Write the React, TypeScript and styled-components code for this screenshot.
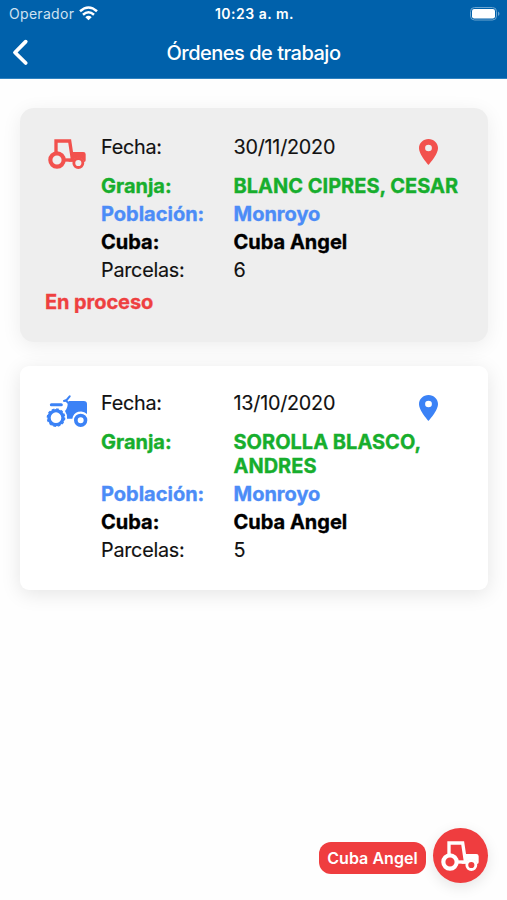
import React from "react";
import styled, { createGlobalStyle } from "styled-components";

const GlobalStyle = createGlobalStyle`
  * { box-sizing: border-box; }
  body {
    margin: 0;
    background: #fefefe;
    font-family: Inter, "Liberation Sans", sans-serif;
    color: #111;
  }
`;

const Screen = styled.div`
  display: flex;
  flex-direction: column;
  height: 900px;
  overflow: hidden;
`;

const Header = styled.header`
  height: 79px;
  background: #0061ab;
  border-bottom: 1px solid #2f82c0;
  color: #fff;
`;

const StatusBar = styled.div`
  display: grid;
  grid-template-columns: 1fr auto 1fr;
  align-items: center;
  height: 27px;
  padding: 0 7px 0 9px;
  font-size: 14px;
`;

const Carrier = styled.div`
  display: flex;
  align-items: center;
  gap: 5px;
  color: #cfe2f1;
  letter-spacing: 0.3px;
`;

const Clock = styled.div`
  font-weight: 600;
  letter-spacing: 0.5px;
`;

const BatterySlot = styled.div`
  display: flex;
  justify-content: flex-end;
`;

const NavBar = styled.div`
  display: grid;
  grid-template-columns: 40px 1fr 40px;
  align-items: center;
  height: 51px;
`;

const BackButton = styled.button`
  display: flex;
  padding: 0 0 0 12px;
  border: 0;
  background: none;
  color: #fff;
`;

const Title = styled.h1`
  margin: 0;
  text-align: center;
  font-size: 20px;
  font-weight: 500;
  letter-spacing: -0.5px;
`;

const OrderList = styled.main`
  display: flex;
  flex-direction: column;
  gap: 24px;
  padding: 29px 19px 0 20px;
`;

const OrderCard = styled.article<{ $active?: boolean }>`
  height: ${(p) => (p.$active ? 234 : 224)}px;
  padding: ${(p) => (p.$active ? 27.7 : 26.4)}px 0 0 25px;
  border-radius: ${(p) => (p.$active ? 14 : 9)}px;
  background: ${(p) => (p.$active ? "#eeeeee" : "#ffffff")};
  box-shadow: 0 4px 20px rgba(0, 0, 0, ${(p) => (p.$active ? 0.07 : 0.1)});
`;

const CardBody = styled.div`
  display: grid;
  grid-template-columns: 56px 1fr;
`;

const VehicleSlot = styled.div<{ $inset: number }>`
  display: flex;
  padding: 3px 0 0 ${(p) => p.$inset}px;
`;

const Fields = styled.div`
  display: flex;
  flex-direction: column;
  gap: 5px;
`;

const FieldRow = styled.div<{ $tone?: string; $first?: boolean }>`
  display: grid;
  grid-template-columns: 132.5px 1fr;
  height: ${(p) => (p.$first ? "34px" : "auto")};
  font-size: ${(p) => (p.$tone ? 20 : 19.8)}px;
  line-height: 23.2px;
  font-weight: ${(p) => (p.$tone ? 700 : 400)};
  letter-spacing: ${(p) => (p.$tone ? 0 : -0.25)}px;
  color: ${(p) => p.$tone || "#111"};
  -webkit-text-stroke: ${(p) => (p.$tone ? 0.35 : 0.15)}px currentColor;
`;

const Value = styled.span``;

const DateValue = styled.div`
  display: grid;
  grid-template-columns: 185px auto;
  justify-content: start;
`;

const PinSlot = styled.span`
  display: flex;
  padding-top: 3px;
`;

const Status = styled.div`
  margin-top: 8px;
  font-size: 20px;
  line-height: 23px;
  font-weight: 700;
  letter-spacing: -0.08px;
  color: #ee4040;
  -webkit-text-stroke: 0.3px currentColor;
`;

const FloatingAction = styled.div`
  position: absolute;
  left: 319px;
  top: 828px;
  display: flex;
  align-items: center;
  gap: 6.5px;
`;

const ActionLabel = styled.span`
  display: flex;
  align-items: center;
  justify-content: center;
  width: 107px;
  height: 32px;
  margin-top: 4px;
  border-radius: 12px;
  background: #ef3d3f;
  color: #fff;
  font-size: 16px;
  font-weight: 600;
  letter-spacing: 0.05px;
`;

const ActionButton = styled.button`
  display: flex;
  align-items: center;
  justify-content: center;
  width: 55px;
  height: 55px;
  padding: 0;
  border: 0;
  border-radius: 50%;
  background: #ef3d3f;
  box-shadow: 0 4px 14px rgba(0, 0, 0, 0.1);
`;

function CabTractor({ color }: { color: string }) {
  return (
    <svg width="38" height="30" viewBox="113 134 114 90" fill="none" stroke={color}>
      <path d="M137 176V140H178L186 193" strokeWidth="10" />
      <path d="M158 197H190" strokeWidth="10" />
      <path
        d="M181 173H219Q226 173 226 180V198Q226 203 221 203A18 18 0 0 0 187 202H174L183 191Z"
        fill={color}
        stroke="none"
      />
      <circle cx="140" cy="197" r="20" strokeWidth="12.5" />
      <circle cx="204" cy="206" r="13.5" strokeWidth="8.5" />
    </svg>
  );
}

function OpenTractor({ color }: { color: string }) {
  return (
    <svg width="42" height="33" viewBox="108 42 126 99" fill="none" stroke={color}>
      <path d="M124 71H154" strokeWidth="9" strokeLinecap="round" />
      <path d="M162 60L170 57L179 46" strokeWidth="6" strokeLinecap="round" strokeLinejoin="round" />
      <path d="M166 58L178 68" strokeWidth="6" />
      <path
        d="M177 60H221Q231 60 231 69V99A26 26 0 0 0 187 113H171A34 34 0 0 0 165 90Q174 80 173 65Z"
        fill={color}
        stroke="none"
      />
      <circle cx="138" cy="110" r="21" strokeWidth="10" />
      <circle cx="138" cy="110" r="26" strokeWidth="4" strokeDasharray="8 5.6" />
      <circle cx="212" cy="118" r="14.5" strokeWidth="11" />
    </svg>
  );
}

function MapPin({ color }: { color: string }) {
  return (
    <svg width="19" height="26" viewBox="5 2 14 20" preserveAspectRatio="none">
      <path
        fill={color}
        fillRule="evenodd"
        d="M12 2C8.13 2 5 5.13 5 9c0 5.25 7 13 7 13s7-7.75 7-13c0-3.87-3.13-7-7-7zm0 9.5a2.5 2.5 0 1 1 0-5 2.5 2.5 0 0 1 0 5z"
      />
    </svg>
  );
}

function Wifi() {
  return (
    <svg width="19" height="15" viewBox="0 0 19 15" fill="none" stroke="#fff" strokeWidth="2.5">
      <path d="M1 5.3Q9.5 -2.4 18 5.3M4 8.7Q9.5 3.8 15 8.7" />
      <path d="M6.3 11.2Q9.5 8.4 12.7 11.2L9.5 14.3Z" fill="#fff" stroke="none" />
    </svg>
  );
}

function Battery() {
  return (
    <svg width="30" height="14" viewBox="0 0 30 14">
      <rect x="0.5" y="0.5" width="26" height="12.5" rx="4" fill="none" stroke="#6ba5d0" />
      <rect x="2" y="2" width="23" height="9.5" rx="2.2" fill="#fff" />
      <path d="M28 4.5Q31 6.7 28 9Z" fill="#6ba5d0" />
    </svg>
  );
}

const GREEN = "#17ae2d";
const BLUE = "#4c8cf7";

interface Order {
  date: string;
  farm: string;
  town: string;
  tank: string;
  plots: number;
  active?: boolean;
}

const orders: Order[] = [
  { date: "30/11/2020", farm: "BLANC CIPRES, CESAR", town: "Monroyo", tank: "Cuba Angel", plots: 6, active: true },
  { date: "13/10/2020", farm: "SOROLLA BLASCO, ANDRES", town: "Monroyo", tank: "Cuba Angel", plots: 5 },
];

function OrderItem({ order }: { order: Order }) {
  const accent = order.active ? "#f2514d" : "#3b82f6";
  return (
    <OrderCard $active={order.active}>
      <CardBody>
        <VehicleSlot $inset={order.active ? 3 : 1}>
          {order.active ? <CabTractor color={accent} /> : <OpenTractor color={accent} />}
        </VehicleSlot>
        <Fields>
          <FieldRow $first>
            <Value>Fecha:</Value>
            <DateValue>
              <Value>{order.date}</Value>
              <PinSlot><MapPin color={accent} /></PinSlot>
            </DateValue>
          </FieldRow>
          <FieldRow $tone={GREEN}><Value>Granja:</Value><Value>{order.farm}</Value></FieldRow>
          <FieldRow $tone={BLUE}><Value>Población:</Value><Value>{order.town}</Value></FieldRow>
          <FieldRow $tone="#000"><Value>Cuba:</Value><Value>{order.tank}</Value></FieldRow>
          <FieldRow><Value>Parcelas:</Value><Value>{order.plots}</Value></FieldRow>
        </Fields>
      </CardBody>
      {order.active && <Status>En proceso</Status>}
    </OrderCard>
  );
}

export default function App() {
  return (
    <Screen>
      <GlobalStyle />
      <Header>
        <StatusBar>
          <Carrier>Operador <Wifi /></Carrier>
          <Clock>10:23 a. m.</Clock>
          <BatterySlot><Battery /></BatterySlot>
        </StatusBar>
        <NavBar>
          <BackButton aria-label="Volver">
            <svg width="17" height="27" viewBox="0 0 17 27" fill="none" stroke="#fff" strokeWidth="3.8" strokeLinecap="round" strokeLinejoin="round">
              <path d="M13.7 2.7L3 13.5L13.7 24" />
            </svg>
          </BackButton>
          <Title>Órdenes de trabajo</Title>
        </NavBar>
      </Header>
      <OrderList>
        {orders.map((order) => <OrderItem key={order.date} order={order} />)}
      </OrderList>
      <FloatingAction>
        <ActionLabel>Cuba Angel</ActionLabel>
        <ActionButton aria-label="Cuba Angel"><CabTractor color="#fff" /></ActionButton>
      </FloatingAction>
    </Screen>
  );
}
